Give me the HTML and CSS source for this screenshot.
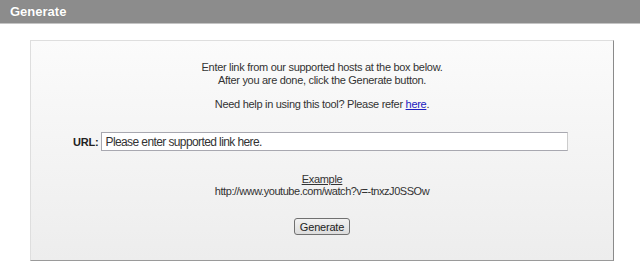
FILE: index.html
```html
<!DOCTYPE html>
<html>
<head>
<meta charset="utf-8">
<link rel="stylesheet" href="styles.css">
</head>
<body>
<div class="header">Generate</div>
<div class="panel">
  <div class="intro">
    <div class="line">Enter link from our supported hosts at the box below.</div>
    <div class="line">After you are done, click the Generate button.</div>
  </div>
  <div class="help">Need help in using this tool? Please refer <a href="#">here</a>.</div>
  <div class="url-row">
    <label class="url-label">URL:</label>
    <input class="url-input" type="text" placeholder="Please enter supported link here.">
  </div>
  <div class="example">
    <div class="example-title">Example</div>
    <div class="example-link">http://www.youtube.com/watch?v=-tnxzJ0SSOw</div>
  </div>
  <div class="actions">
    <button class="gen-btn">Generate</button>
  </div>
</div>
</body>
</html>
```
FILE: styles.css
```css
html, body {
  margin: 0;
  padding: 0;
  background: #fff;
  font-family: "Liberation Sans", Arial, sans-serif;
}
.header {
  height: 23px;
  line-height: 23px;
  background: #8c8c8c;
  border-bottom: 1px solid #c4c4c4;
  color: #fff;
  font-weight: bold;
  font-size: 13px;
  padding-left: 10px;
  text-shadow: 0 0 1px #777;
}
.panel {
  margin: 16px 0 0 30px;
  width: 582px;
  height: 219px;
  border-top: 1px solid #dedede;
  border-left: 1px solid #dedede;
  border-right: 1px solid #8a8a8a;
  border-bottom: 1px solid #9a9a9a;
  background: linear-gradient(#fbfbfb, #ededed);
  display: flex;
  flex-direction: column;
  align-items: center;
  font-size: 11px;
  letter-spacing: -0.3px;
  color: #333;
}
.intro {
  margin-top: 20px;
  text-align: center;
  line-height: 13px;
}
.help {
  margin-top: 11px;
  line-height: 13px;
}
.help a {
  color: #2020c0;
}
.url-row {
  margin-top: 21px;
  display: flex;
  align-items: center;
  align-self: flex-start;
  margin-left: 42px;
}
.url-label {
  font-weight: bold;
  color: #222;
  font-size: 11px;
  letter-spacing: -0.2px;
  margin-right: 3px;
}
.url-input {
  box-sizing: border-box;
  width: 467px;
  height: 19px;
  border: 1px solid #a8a8b0;
  border-right-color: #ccc;
  padding: 0 3px;
  font-family: "Liberation Sans", Arial, sans-serif;
  font-size: 12px;
  letter-spacing: -0.6px;
  background: #fff;
}
.url-input::placeholder {
  color: #333;
}
.example {
  margin-top: 22px;
  text-align: center;
  line-height: 12px;
}
.example-title {
  text-decoration: underline;
}
.example-link {
  letter-spacing: -0.45px;
}
.actions {
  margin-top: 21px;
}
.gen-btn {
  box-sizing: border-box;
  height: 17px;
  width: 56px;
  padding: 0;
  font-family: "Liberation Sans", Arial, sans-serif;
  font-size: 11px;
  letter-spacing: -0.2px;
  color: #222;
  border: 1px solid #707070;
  border-radius: 3px;
  background: linear-gradient(#f2f2f2, #dcdcdc);
}
```
